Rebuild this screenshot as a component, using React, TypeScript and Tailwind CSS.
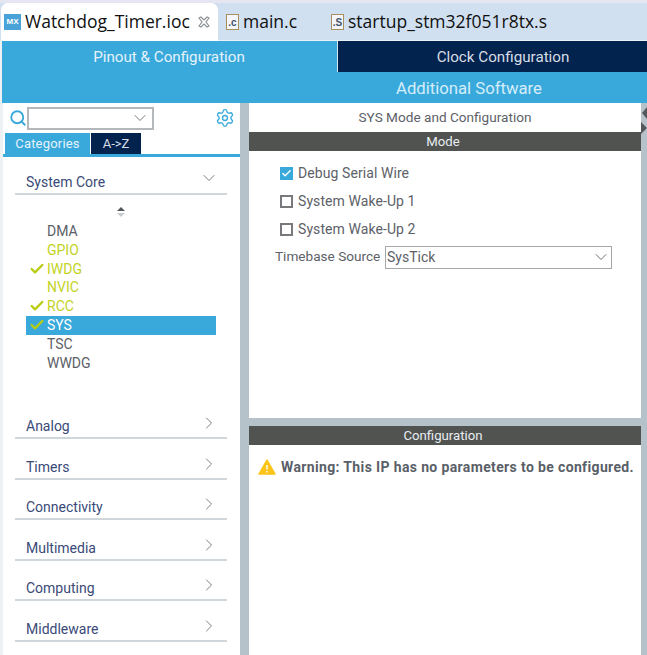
import { Check, ChevronDown, ChevronRight, Search, Settings } from 'lucide-react';

const tabFont = 'font-["Open_Sans",sans-serif]';

const FileIcon = ({ letter }: { letter: string }) => (
  <span className="flex h-[16px] w-[13px] items-end justify-center border border-[#a98f5c] bg-[#f4f6fa] font-['Liberation_Sans',sans-serif] text-[10px] font-bold leading-[13px] text-[#44536b]">
    {letter}
  </span>
);

const SoftTab = ({ title, letter, className }: { title: string; letter: string; className: string }) => (
  <div className={`flex items-center gap-[4px] ${className}`}>
    <FileIcon letter={letter} />
    <span className={`${tabFont} text-[17.5px] leading-none text-[#101010]`}>{title}</span>
  </div>
);

const CategoryRow = ({ label, open }: { label: string; open?: boolean }) => (
  <div className={`ml-[12px] mr-[13px] flex items-end justify-between border-b-2 border-[#cfd6dc] pb-[2px] pl-[11px] pr-[8px] ${open ? 'h-[38px]' : 'h-[40.6px]'}`}>
    <span className="text-[14px] leading-[18px] text-[#3a4a78]">{label}</span>
    {open ? (
      <ChevronDown size={20} strokeWidth={1} className="mb-[3px] text-[#5f6468]" />
    ) : (
      <ChevronRight size={20} strokeWidth={1} className="mb-[2px] text-[#5f6468]" />
    )}
  </div>
);

const peripherals = [
  { name: 'DMA', tone: 'plain' },
  { name: 'GPIO', tone: 'lime' },
  { name: 'IWDG', tone: 'lime', checked: true },
  { name: 'NVIC', tone: 'lime' },
  { name: 'RCC', tone: 'lime', checked: true },
  { name: 'SYS', tone: 'selected', checked: true },
  { name: 'TSC', tone: 'plain' },
  { name: 'WWDG', tone: 'plain' },
];

const PeripheralRow = ({ name, tone, checked }: { name: string; tone: string; checked?: boolean }) => (
  <div className={`flex h-[18.85px] w-[190px] items-center ${tone === 'selected' ? 'bg-[#39a9dc] text-white' : tone === 'lime' ? 'text-[#c3d31e]' : 'text-[#5b6068]'}`}>
    <span className="flex w-[21px] justify-center pl-[1px]">
      {checked && <Check size={16} strokeWidth={3.5} className="text-[#b9cc12]" />}
    </span>
    <span className="text-[14px] leading-none">{name}</span>
  </div>
);

const ModeOption = ({ label, checked }: { label: string; checked?: boolean }) => (
  <div className="flex h-[28px] items-center gap-[5px] pl-[31px]">
    {checked ? (
      <span className="flex h-[13px] w-[13px] items-center justify-center bg-[#39a9dc]">
        <Check size={11} strokeWidth={3} className="text-white" />
      </span>
    ) : (
      <span className="h-[13px] w-[13px] border-2 border-[#77797c] bg-white" />
    )}
    <span className="text-[14px] leading-none tracking-[0.08px] text-[#5d6168]">{label}</span>
  </div>
);

const SectionBar = ({ title }: { title: string }) => (
  <div className="flex h-[18.5px] shrink-0 items-center justify-center bg-[#515350] pr-[4px] text-[13.2px] leading-none text-[#e8edf2]">{title}</div>
);

export default function App() {
  return (
    <div className="flex h-[655px] w-[647px] flex-col overflow-hidden bg-[#b5c2ca] font-['Roboto',sans-serif]">
      <div className="h-[3px] bg-[#e6e6f2]" />

      <div className="flex h-[38px] shrink-0 items-stretch border-b border-[#eaf1f8] bg-[#d0e0f1]">
        <div className="-mb-px ml-[1px] flex w-[217px] items-center rounded-t-[7px] bg-white pl-[3px]">
          <span className="flex h-[16px] w-[17px] items-center justify-center bg-[#4aa3d8] font-['Liberation_Sans',sans-serif] text-[8px] font-bold text-white">MX</span>
          <span className={`${tabFont} ml-[4px] text-[17.5px] leading-none text-[#101010]`}>Watchdog_Timer.ioc</span>
          <svg className="ml-[8px]" width="12" height="12" viewBox="0 0 12 12" fill="none" stroke="#8d9296" strokeWidth="1.2">
            <path d="M1 2l2-1 3 3 3-3 2 1-3 4 3 4-2 1-3-3-3 3-2-1 3-4z" />
          </svg>
        </div>
        <SoftTab title="main.c" letter=".c" className="ml-[8px] w-[101px]" />
        <SoftTab title="startup_stm32f051r8tx.s" letter=".S" className="ml-[4px]" />
      </div>

      <div className="flex h-[62px] shrink-0 flex-col border-l-2 border-[#eef1f3] bg-[#39a9dc]">
        <div className="flex h-[31px] shrink-0">
          <div className="flex w-[334px] items-center justify-center pt-[2px] text-[15.2px] leading-none text-[#e4f3fb]">Pinout &amp; Configuration</div>
          <div className="ml-[1px] flex flex-1 items-center justify-center border-l border-[#cfe6f2] bg-[#03234f] pl-[21px] pt-[2px] text-[15.2px] leading-none text-[#d9dee6]">Clock Configuration</div>
        </div>
        <div className="flex h-[31px] shrink-0 items-center justify-center pl-[291px] pt-[3px] text-[16.7px] leading-none text-[#d5edf9]">
          <span className="mr-[2px]">Additional Software</span>
        </div>
      </div>

      <div className="flex min-h-0 flex-1">
        <div className="flex w-[240px] shrink-0 flex-col border-l-[3px] border-[#eef1f3] bg-white">
          <div className="flex h-[30px] shrink-0 items-center pl-[6px]">
            <Search size={18} strokeWidth={2.5} className="text-[#39a9dc]" />
            <div className="flex h-[23px] w-[127px] items-center justify-end border-2 border-[#b5b8ba] bg-white pr-[2px]">
              <ChevronDown size={20} strokeWidth={1.2} className="text-[#77797c]" />
            </div>
            <Settings size={20} strokeWidth={1.6} className="ml-[61px] text-[#39a9dc]" />
          </div>
          <div className="ml-[2px] flex h-[21px] shrink-0">
            <div className="flex w-[85px] items-center justify-center bg-[#39a9dc] text-[13px] leading-none tracking-[0.2px] text-[#e4f3fb]">Categories</div>
            <div className="ml-[1px] flex w-[50px] items-center justify-center bg-[#03234f] text-[13px] leading-none text-[#d9dee6]">A-&gt;Z</div>
          </div>
          <div className="h-[3px] shrink-0 bg-[#39a9dc]" />

          <div className="flex min-h-0 flex-1 flex-col">
            <CategoryRow label="System Core" open />
            <div className="flex justify-center pr-[1px] pt-[12px]">
              <svg width="10" height="11" viewBox="0 0 10 11">
                <path d="M5 0l4 4H1z" fill="#55585a" />
                <path d="M5 10L1 6h8z" fill="#c8ccce" />
              </svg>
            </div>
            <div className="ml-[23px] mt-[3.5px] flex h-[175px] shrink-0 flex-col">
              {peripherals.map((p) => (
                <PeripheralRow key={p.name} name={p.name} tone={p.tone} checked={p.checked} />
              ))}
            </div>
            <div className="mt-[2px]">
              {['Analog', 'Timers', 'Connectivity', 'Multimedia', 'Computing', 'Middleware'].map((c) => (
                <CategoryRow key={c} label={c} />
              ))}
            </div>
          </div>
        </div>

        <div className="ml-[9px] flex w-[392px] shrink-0 flex-col">
          <div className="flex h-[315px] shrink-0 flex-col bg-white">
            <div className="flex h-[29px] shrink-0 items-center justify-center text-[13.6px] leading-none text-[#5d6168]">SYS Mode and Configuration</div>
            <SectionBar title="Mode" />
            <div className="pt-[8.5px]">
              <ModeOption label="Debug Serial Wire" checked />
              <ModeOption label="System Wake-Up 1" />
              <ModeOption label="System Wake-Up 2" />
              <div className="flex h-[28px] items-center pl-[26px]">
                <span className="w-[110px] text-[13.6px] leading-none text-[#5d6168]">Timebase Source</span>
                <div className="flex h-[23px] w-[227px] items-center justify-between border border-[#a5a8aa] bg-white pl-[1px]">
                  <span className="text-[14px] leading-none text-[#5d6168]">SysTick</span>
                  <ChevronDown size={20} strokeWidth={1.2} className="text-[#6d7074]" />
                </div>
              </div>
            </div>
          </div>
          <div className="mt-[8px] flex min-h-0 flex-1 flex-col bg-white">
            <SectionBar title="Configuration" />
            <div className="flex items-center gap-[5px] pl-[9px] pt-[14px]">
              <svg width="18" height="16" viewBox="0 0 18 16">
                <path d="M9 1l8 14H1z" fill="#fcc419" stroke="#fcc419" strokeLinejoin="round" strokeWidth="1.5" />
                <path d="M9 6v4.5M9 12v1.4" stroke="#fff" strokeWidth="1.4" />
              </svg>
              <span className="whitespace-nowrap text-[14px] font-bold leading-none tracking-[0.36px] text-[#5a5f68]">Warning: This IP has no parameters to be configured.</span>
            </div>
          </div>
        </div>

        <div className="relative flex-1">
          <svg className="absolute left-0 top-[3px]" width="6" height="28" viewBox="0 0 6 28">
            <path d="M6 1L1 7l5 6z" fill="#55585a" />
            <path d="M0 16l6 6-6 6z" fill="#55585a" />
          </svg>
        </div>
      </div>
    </div>
  );
}
